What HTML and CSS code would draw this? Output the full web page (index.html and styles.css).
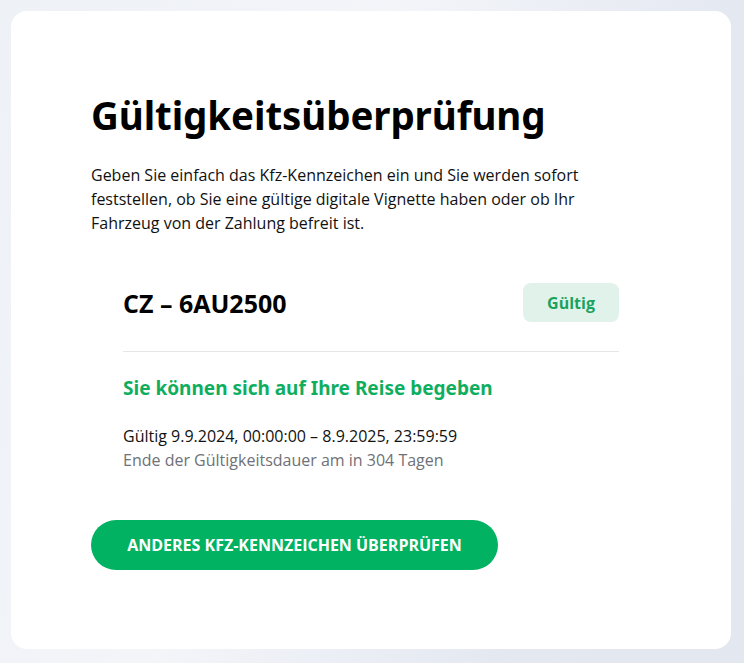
FILE: index.html
```html
<!DOCTYPE html>
<html lang="de">
<head>
<meta charset="utf-8">
<link rel="stylesheet" href="styles.css">
</head>
<body>
<main class="card">
  <h1 class="title">Gültigkeitsüberprüfung</h1>
  <p class="intro">Geben Sie einfach das Kfz-Kennzeichen ein und Sie werden sofort feststellen, ob Sie eine gültige digitale Vignette haben oder ob Ihr Fahrzeug von der Zahlung befreit ist.</p>
  <section class="result">
    <div class="result-head">
      <div class="plate">CZ – 6AU2500</div>
      <div class="badge">Gültig</div>
    </div>
    <h2 class="status">Sie können sich auf Ihre Reise begeben</h2>
    <p class="validity">Gültig 9.9.2024, 00:00:00 – 8.9.2025, 23:59:59</p>
    <p class="remaining">Ende der Gültigkeitsdauer am in 304 Tagen</p>
  </section>
  <button class="btn" type="button">ANDERES KFZ-KENNZEICHEN ÜBERPRÜFEN</button>
</main>
</body>
</html>
```
FILE: styles.css
```css
html, body {
  margin: 0;
  padding: 0;
}
body {
  background: linear-gradient(110deg, #eef1f6 0%, #f3f5f9 40%, #e4e8f1 75%, #e2e7f0 100%);
  font-family: "Open Sans", "Noto Sans", sans-serif;
  color: #111;
  height: 663px;
  overflow: hidden;
  box-sizing: border-box;
  padding: 11px 13px 14px 11px;
}
.card {
  background: #fff;
  border-radius: 16px;
  height: 638px;
  box-sizing: border-box;
  padding: 82px 80px 0 80px;
}
.title {
  margin: 0;
  font-family: "Noto Sans", sans-serif;
  font-weight: 700;
  font-size: 38.5px;
  line-height: 44px;
  letter-spacing: -0.1px;
  color: #000;
}
.intro {
  margin: 26px 0 0 0;
  max-width: 500px;
  font-size: 16px;
  line-height: 24px;
  color: #111;
}
.result {
  margin: 48px 32px 0 32px;
}
.result-head {
  display: flex;
  justify-content: space-between;
  align-items: center;
  padding-bottom: 29px;
  border-bottom: 1px solid #e6e6e6;
}
.plate {
  font-size: 25px;
  font-weight: 700;
  color: #000;
}
.badge {
  width: 96px;
  height: 39px;
  border-radius: 8px;
  background: #e1f2ea;
  color: #1aa35e;
  font-weight: 700;
  font-size: 16px;
  display: flex;
  align-items: center;
  justify-content: center;
}
.status {
  margin: 22px 0 0 0;
  font-family: "Noto Sans", sans-serif;
  font-weight: 700;
  font-size: 19px;
  line-height: 28px;
  color: #0fae5f;
}
.validity {
  margin: 22px 0 0 0;
  font-size: 16px;
  line-height: 24px;
  color: #111;
}
.remaining {
  margin: 0;
  font-size: 16px;
  line-height: 24px;
  color: #6f7177;
}
.btn {
  margin-top: 48px;
  width: 407px;
  height: 50px;
  border: 0;
  border-radius: 25px;
  background: #00b261;
  color: #fff;
  font-family: "Open Sans", sans-serif;
  font-weight: 700;
  font-size: 16px;
  cursor: pointer;
}
```
